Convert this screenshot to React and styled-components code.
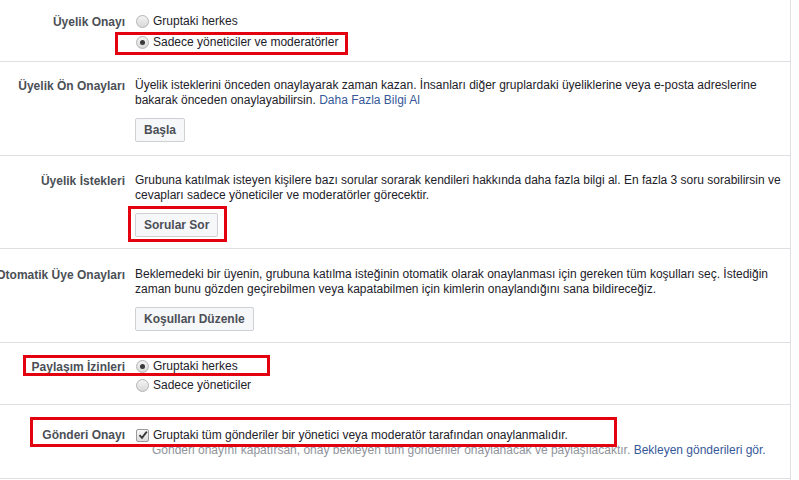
import React from 'react';
import styled, { createGlobalStyle } from 'styled-components';

const GlobalStyle = createGlobalStyle`
  html, body {
    margin: 0;
    padding: 0;
    background: #fff;
    font-family: "Liberation Sans", Arial, Helvetica, sans-serif;
    font-size: 12px;
    color: #1d2129;
  }
`;

const Panel = styled.div`
  width: 790px;
  border-right: 1px solid #dddfe2;
  overflow: hidden;
  height: 480px;
`;

const Section = styled.div`
  position: relative;
  display: flex;
  border-bottom: 1px solid #dddfe2;
  padding: ${(p) => p.$pad || '16px 0 13px'};
`;

const Label = styled.div`
  flex: 0 0 125px;
  width: 125px;
  margin-right: 10px;
  display: flex;
  justify-content: flex-end;
  white-space: nowrap;
  font-weight: bold;
  color: #4b4f56;
  line-height: 16px;
  padding-top: ${(p) => p.$top || '0'};
`;

const Content = styled.div`
  flex: 1;
  padding-right: 2px;
  line-height: 15px;
`;

const Text = styled.div`
  color: ${(p) => (p.$muted ? '#90949c' : '#1d2129')};
  margin-left: ${(p) => p.$indent || '0'};
`;

const Link = styled.a`
  color: #365899;
  text-decoration: none;
`;

const Button = styled.button`
  display: inline-block;
  margin-top: 10px;
  height: 24px;
  padding: 0 8px;
  background: #f6f7f9;
  border: 1px solid #ced0d4;
  border-radius: 2px;
  font-family: inherit;
  font-size: 12px;
  font-weight: bold;
  color: #4b4f56;
  line-height: 22px;
`;

const OptionList = styled.div`
  display: flex;
  flex-direction: column;
  gap: ${(p) => p.$gap || '3px'};
`;

const Option = styled.label`
  display: flex;
  align-items: center;
  gap: 4px;
  line-height: 16px;
  color: #1d2129;
`;

const Radio = styled.span`
  position: relative;
  flex: 0 0 auto;
  width: 11px;
  height: 11px;
  margin-left: 1px;
  border-radius: 50%;
  border: 1px solid #b4b4b4;
  background: linear-gradient(#f4f4f4, #d8d8d8);

  &::after {
    content: '';
    display: ${(p) => (p.$checked ? 'block' : 'none')};
    position: absolute;
    left: 3px;
    top: 3px;
    width: 5px;
    height: 5px;
    border-radius: 50%;
    background: #3a3a3a;
  }
`;

const Check = styled.span`
  flex: 0 0 auto;
  width: 11px;
  height: 11px;
  margin-left: 1px;
  border: 1px solid #9a9a9a;
  border-radius: 2px;
  background: linear-gradient(#f6f6f6, #dcdcdc);
  display: flex;
  align-items: center;
  justify-content: center;
`;

const RedBox = styled.div`
  position: absolute;
  left: ${(p) => p.$x}px;
  top: ${(p) => p.$y}px;
  width: ${(p) => p.$w}px;
  height: ${(p) => p.$h}px;
  border: 3px solid #e3000f;
  box-sizing: border-box;
  pointer-events: none;
`;

export default function App() {
  return (
    <Panel>
      <GlobalStyle />

      <Section $pad="13px 0 11px">
        <Label $top="1px">Üyelik Onayı</Label>
        <Content>
          <OptionList $gap="5px">
            <Option>
              <Radio />
              Gruptaki herkes
            </Option>
            <Option>
              <Radio $checked />
              Sadece yöneticiler ve moderatörler
            </Option>
          </OptionList>
        </Content>
        <RedBox $x={115} $y={32} $w={233} $h={23} />
      </Section>

      <Section>
        <Label>Üyelik Ön Onayları</Label>
        <Content>
          <Text>
            Üyelik isteklerini önceden onaylayarak zaman kazan. İnsanları diğer gruplardaki üyeliklerine veya e-posta adreslerine
            bakarak önceden onaylayabilirsin. <Link>Daha Fazla Bilgi Al</Link>
          </Text>
          <Button>Başla</Button>
        </Content>
      </Section>

      <Section $pad="17px 0 11px">
        <Label>Üyelik İstekleri</Label>
        <Content>
          <Text>
            Grubuna katılmak isteyen kişilere bazı sorular sorarak kendileri hakkında daha fazla bilgi al. En fazla 3 soru sorabilirsin ve
            cevapları sadece yöneticiler ve moderatörler görecektir.
          </Text>
          <Button>Sorular Sor</Button>
        </Content>
        <RedBox $x={128} $y={50} $w={99} $h={36} />
      </Section>

      <Section $pad="18px 0 11px">
        <Label>Otomatik Üye Onayları</Label>
        <Content>
          <Text>
            Beklemedeki bir üyenin, grubuna katılma isteğinin otomatik olarak onaylanması için gereken tüm koşulları seç. İstediğin
            zaman bunu gözden geçirebilmen veya kapatabilmen için kimlerin onaylandığını sana bildireceğiz.
          </Text>
          <Button>Koşulları Düzenle</Button>
        </Content>
      </Section>

      <Section $pad="15px 0 11px">
        <Label $top="1px">Paylaşım İzinleri</Label>
        <Content>
          <OptionList $gap="3px">
            <Option>
              <Radio $checked />
              Gruptaki herkes
            </Option>
            <Option>
              <Radio />
              Sadece yöneticiler
            </Option>
          </OptionList>
        </Content>
        <RedBox $x={23} $y={12} $w={247} $h={21} />
      </Section>

      <Section $pad="22px 0 20px">
        <Label $top="0">Gönderi Onayı</Label>
        <Content>
          <Option>
            <Check>
              <svg width="10" height="10" viewBox="0 0 10 10">
                <path d="M1.5 5.2 L4 7.8 L8.8 1.6" fill="none" stroke="#333" strokeWidth="1.8" />
              </svg>
            </Check>
            Gruptaki tüm gönderiler bir yönetici veya moderatör tarafından onaylanmalıdır.
          </Option>
          <Text $muted $indent="17px">
            Gönderi onayını kapatırsan, onay bekleyen tüm gönderiler onaylanacak ve paylaşılacaktır. <Link>Bekleyen gönderileri gör.</Link>
          </Text>
        </Content>
        <RedBox $x={30} $y={12} $w={587} $h={30} />
      </Section>
    </Panel>
  );
}
